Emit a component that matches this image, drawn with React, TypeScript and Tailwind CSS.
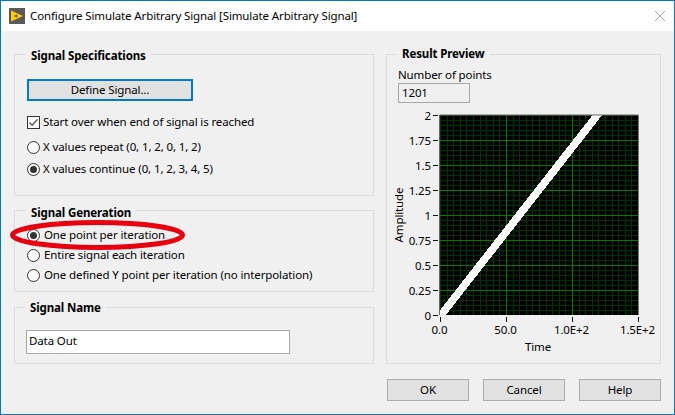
import type { ReactNode } from "react"

const yTicks = [
    { label: "2", y: 115 },
    { label: "1.75", y: 140 },
    { label: "1.5", y: 165 },
    { label: "1.25", y: 190 },
    { label: "1", y: 215 },
    { label: "0.75", y: 240 },
    { label: "0.5", y: 265 },
    { label: "0.25", y: 290 },
    { label: "0", y: 315 },
]

const xTicks = [
    { label: "0.0", x: 440 },
    { label: "50.0", x: 506 },
    { label: "1.0E+2", x: 572 },
    { label: "1.5E+2", x: 638 },
]

const minorX = Array.from({ length: 30 }, (_, i) => 440 + i * 6.6)
const minorY = Array.from({ length: 40 }, (_, i) => 115 + i * 5)

const Group = ({ title, leading, className, children }: { title: string; leading: string; className: string; children: ReactNode }) => (
    <fieldset className={`border border-[#dcdcdc] ${className}`}>
        <legend className={`-ml-[1px] px-[5px] h-4 font-bold text-black ${leading}`}>{title}</legend>
        {children}
    </fieldset>
)

const Radio = ({ checked, label, className }: { checked?: boolean; label: string; className: string }) => (
    <div className={`flex items-center gap-[3px] ${className}`}>
        <span className="w-[13px] h-[13px] rounded-full border border-[#333] bg-white flex items-center justify-center">
            {checked && <span className="w-[7px] h-[7px] rounded-full bg-[#333]" />}
        </span>
        <span>{label}</span>
    </div>
)

const DialogButton = ({ label }: { label: string }) => (
    <button className="w-[82px] h-[22px] bg-[#e1e1e1] border border-[#adadad] text-black">{label}</button>
)

const Chart = () => (
    <svg className="block mt-[5px] -ml-[10px]" width="272" height="250" viewBox="388 108 272 250">
        <rect x="439.5" y="115" width="199" height="200" fill="#000" />
        {minorX.map((x) => (
            <line key={x} x1={Math.round(x) + 0.5} x2={Math.round(x) + 0.5} y1="115" y2="315" stroke="#003500" />
        ))}
        {minorY.map((y) => (
            <line key={y} x1="440" x2="638" y1={y + 0.5} y2={y + 0.5} stroke="#003500" />
        ))}
        {[506, 572].map((x) => (
            <line key={x} x1={x + 0.5} x2={x + 0.5} y1="115" y2="315" stroke="#007a00" />
        ))}
        {yTicks.slice(1, 8).map((t) => (
            <line key={t.y} x1="440" x2="638" y1={t.y + 0.5} y2={t.y + 0.5} stroke="#007a00" />
        ))}
        <clipPath id="plot">
            <rect x="440" y="115" width="198" height="200" />
        </clipPath>
        <line x1="439.5" y1="317" x2="599" y2="113" stroke="#fff" strokeWidth="7.6" shapeRendering="crispEdges" clipPath="url(#plot)" />
        <path d="M439.5 115H638.5M439.5 115V315" stroke="#666" fill="none" />
        {yTicks.map((t) => (
            <g key={t.label}>
                <line x1="433" x2="438" y1={t.y + 0.5} y2={t.y + 0.5} stroke="#111" />
                <text x="431" y={t.y + 4.5} textAnchor="end" fill="#000">{t.label}</text>
            </g>
        ))}
        {xTicks.map((t) => (
            <g key={t.label}>
                <line x1={t.x + 0.5} x2={t.x + 0.5} y1="317" y2="322" stroke="#111" />
                <text x={t.x - 0.5} y="334" textAnchor="middle" fill="#000">{t.label}</text>
            </g>
        ))}
        <text x="538" y="351" textAnchor="middle" fill="#000">Time</text>
        <text transform="translate(403 215) rotate(-90)" textAnchor="middle" fill="#000">Amplitude</text>
    </svg>
)

export default function App() {
    return (
        <div className="relative w-[675px] h-[415px] overflow-hidden border border-[#0078d7] bg-[#f0f0f0] font-['Noto_Sans',sans-serif] text-[11.5px] tracking-[-0.12px] text-black">
            {/* Title bar */}
            <div className="h-[30px] bg-white flex items-center pl-[8px] pr-[9px]">
                <svg width="16" height="16" viewBox="0 0 16 16">
                    <rect width="16" height="16" fill="#595959" />
                    <path d="M2 2.5V13.5L14 8Z" fill="#ffcc00" />
                    <path d="M5 8H8M7 6.8L8.5 8L7 9.2Z" stroke="#595959" strokeWidth="1" fill="none" />
                </svg>
                <span className="ml-[5px] flex-1">Configure Simulate Arbitrary Signal [Simulate Arbitrary Signal]</span>
                <svg width="10" height="10" viewBox="0 0 10 10" stroke="#a8a8a8">
                    <path d="M0 0L10 10M10 0L0 10" />
                </svg>
            </div>

            {/* Dialog body */}
            <div className="flex pl-[13px] pt-[15px]">
                <div className="w-[360px] flex flex-col">
                    <Group title="Signal Specifications" leading="leading-[19px]" className="h-[150px] pl-[12px]">
                        <button className="block mt-[17px] w-[166px] h-[22px] bg-[#e1e1e1] border-2 border-[#0078d7]">Define Signal...</button>
                        <div className="flex items-center gap-[3px] mt-[14px] h-[14px]">
                            <span className="w-[13px] h-[13px] border border-[#333] bg-white flex items-center justify-center">
                                <svg width="11" height="11" viewBox="0 0 11 11" fill="none" stroke="#555" strokeWidth="1.3">
                                    <path d="M1.5 5.5L4.2 8.3L9.5 2.2" />
                                </svg>
                            </span>
                            <span>Start over when end of signal is reached</span>
                        </div>
                        <Radio label="X values repeat (0, 1, 2, 0, 1, 2)" className="mt-[11px] h-[14px]" />
                        <Radio checked label="X values continue (0, 1, 2, 3, 4, 5)" className="mt-[8px] h-[14px]" />
                    </Group>
                    <Group title="Signal Generation" leading="leading-[21px]" className="mt-[6px] h-[90px] pl-[12px]">
                        <Radio checked label="One point per iteration" className="mt-[10px] h-[14px] gap-[4px]" />
                        <Radio label="Entire signal each iteration" className="mt-[6px] h-[14px] gap-[4px]" />
                        <Radio label="One defined Y point per iteration (no interpolation)" className="mt-[6px] h-[14px] gap-[4px]" />
                    </Group>
                    <Group title="Signal Name" leading="leading-[17px]" className="mt-[7px] h-[65px] pl-[11px]">
                        <div className="mt-[15px] w-[264px] h-[24px] bg-white border border-[#a8a8a8] pl-[2px] leading-[20px]">Data Out</div>
                    </Group>
                </div>

                <div className="ml-[12px] w-[275px]">
                    <Group title="Result Preview" leading="leading-[15px]" className="h-[318px] pl-[11px]">
                        <div className="mt-[5px] h-[16px] leading-4">Number of points</div>
                        <div className="w-[72px] h-[20px] border border-[#a8a8a8] pl-[3px] leading-[18px]">1201</div>
                        <Chart />
                    </Group>
                    <div className="flex justify-between mt-[15px] pl-[1px]">
                        <DialogButton label="OK" />
                        <DialogButton label="Cancel" />
                        <DialogButton label="Help" />
                    </div>
                </div>
            </div>

            {/* Red annotation */}
            <svg className="absolute left-[9px] top-[218px]" width="180" height="34" viewBox="0 0 180 34" fill="none">
                <ellipse cx="87.5" cy="16" rx="85" ry="12.5" stroke="#e8000f" strokeWidth="5" />
            </svg>
        </div>
    )
}
